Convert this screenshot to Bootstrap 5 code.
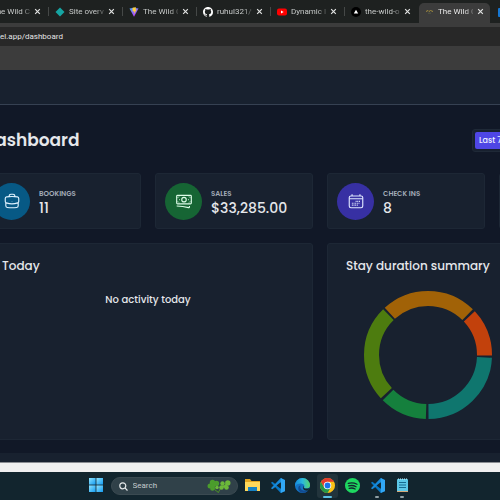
<!DOCTYPE html>
<html lang="en">
<head>
<meta charset="utf-8">
<meta name="viewport" content="width=device-width, initial-scale=1">
<title>The Wild Oasis</title>
<link href="https://cdn.jsdelivr.net/npm/bootstrap@5.3.0/dist/css/bootstrap.min.css" rel="stylesheet">
<style>
body{background:#111827;color:#e5e7eb;font-family:Poppins,Inter,"Open Sans",sans-serif;min-height:100vh;overflow:hidden}
button{border:0;background:none;padding:0;color:inherit}
svg{display:block;flex:none}
.chrome-ui{font-family:Roboto,"Noto Sans",sans-serif;font-size:8px;line-height:12px}
.tabstrip{background:#1e2120;height:23px}
.tab{flex:0 0 74px;height:23px;padding-left:6px;gap:4px;position:relative;color:#c6c9c8}
.tab::after{content:"";position:absolute;right:0;top:7px;width:1px;height:9px;background:#454847}
.tab.first{flex-basis:49px;justify-content:flex-end;padding-left:0;overflow:hidden}
.tab.plain::after{display:none}
.tab .label{width:35px;flex:none;white-space:nowrap;color:inherit;text-decoration:none;-webkit-mask-image:linear-gradient(90deg,#000 76%,transparent 110%);mask-image:linear-gradient(90deg,#000 76%,transparent 110%)}
.tab.active{flex-basis:71px;height:20px;margin-top:3px;padding-bottom:3px;background:#3c3c3c;border-radius:5px 5px 0 0;color:#e8e8e8}
.toolbar{background:#3c3c3c;padding:4px 0 24px}
.address{display:block;width:100%;height:19px;border:0;padding:0;background:#282828;color:#e4e4e4;font-size:8px}
.app-head{height:35px;background:#18212f;border-bottom:1px solid #364152}
.app-main{margin:0 -157px 0 -17px;padding-top:24px}
.page-head{margin-bottom:21px}
.page-title{font-size:17px;line-height:23px;font-weight:600}
.filter{width:185px;border:1px solid #1f2937;background:#18212f;border-radius:3px;padding:2px}
.filter button{background:#4f46e5;border-radius:2px;color:#eef2ff;font-size:8px;line-height:17px;font-weight:500;padding:0 4px}
.tiles{display:grid;grid-template-columns:repeat(4,1fr);gap:14px}
.tile{background:#18212f;border:1px solid #1d2735;border-radius:3px}
.stat{height:56px;padding:0 9px;gap:9px}
.disc{width:37px;height:37px;border-radius:50%;flex:none}
.stat-name{padding-top:5px;font-size:7px;line-height:9px;font-weight:600;color:#a3abb8;text-transform:uppercase}
.stat-value{font-size:14px;line-height:20px;font-weight:500}
.panel{grid-column:span 2;min-height:197px;padding:13px 18px}
.panel h2{font-size:12px;line-height:18px;font-weight:500;margin:0}
.empty{font-size:10px;line-height:16px;font-weight:500;margin:17px 0 0}
.donut{margin:15px 0 0 17px}
.scroll-edge{height:9px;background:#18212f;margin-top:13px}
.strip{height:10px;background:#f0f0f0;border-top:1px solid #8a8d92}
.taskbar{background:#12252e;height:28px;gap:4px;padding-right:2px}
.task-btn{width:21px;height:24px;padding-bottom:2px;border-radius:3px;position:relative;display:flex;align-items:center;justify-content:center}
.running::after{content:"";position:absolute;bottom:0;width:4px;height:2px;border-radius:1px;background:#91a0a6}
.current{background:#22343c}
.current.running::after{width:9px;background:#5bc0e4}
.search{width:127px;height:18px;border-radius:9px;background:#304149;padding:0 6px 0 7px;gap:5px;border:1px solid #3b4a51}
.search input{min-width:0;flex:1;border:0;background:none;padding:0;color:#d5dadc;font-size:8px;line-height:12px}
.search input::placeholder{color:#c4cbce;opacity:1}
</style>
<script src="https://cdn.jsdelivr.net/npm/bootstrap@5.3.0/dist/js/bootstrap.bundle.min.js"></script>
</head>
<body class="d-flex flex-column">
<svg width="0" height="0" class="position-absolute" aria-hidden="true">
<defs>
<symbol id="x" viewBox="0 0 6 6"><path d="M1 1l4 4M5 1L1 5" stroke="#e2e4e3" stroke-width="1" fill="none"/></symbol>
<symbol id="code" viewBox="0 0 16 16"><path d="M1 5l1.500-1L15 13.500 11.500 16z" fill="#0877c5"/><path d="M1 11l1.500 1L15 2.500 11.500 0z" fill="#1689da"/><path d="M11.500 0L16 2v12l-4.500 2z" fill="#31a7f5"/><path d="M11.500 4.500v7L7 8z" fill="#12252e"/></symbol>
<linearGradient id="win" x2="1" y2="1"><stop stop-color="#8fe4ff"/><stop offset="1" stop-color="#129af0"/></linearGradient>
<linearGradient id="edge" x2="1" y2="0"><stop stop-color="#1688dc"/><stop offset=".5" stop-color="#2bb9dc"/><stop offset="1" stop-color="#55d66b"/></linearGradient>
<linearGradient id="vite" x2=".6" y2="1"><stop stop-color="#41a8ff"/><stop offset="1" stop-color="#c43cf5"/></linearGradient>
</defs>
</svg>

<header class="chrome-ui">
<nav class="tabstrip d-flex overflow-hidden" aria-label="Tabs">
<div class="tab first d-flex align-items-center"><a class="label d-flex justify-content-end" href="#">The Wild C</a><button aria-label="Close tab" class="me-2"><svg width="7" height="7"><use href="#x"/></svg></button></div>
<div class="tab d-flex align-items-center"><svg width="10" height="10" viewBox="0 0 10 10"><path d="M5 .5L9.500 5 5 9.500.500 5z" fill="#16a5a3"/></svg><a class="label" href="#">Site overv</a><button aria-label="Close tab"><svg width="7" height="7"><use href="#x"/></svg></button></div>
<div class="tab d-flex align-items-center"><svg width="10" height="10" viewBox="0 0 10 10"><path d="M.5 1.500L5 .8l4.500.7L5 9.700z" fill="url(#vite)"/><path d="M3.500.700L7 .2 6.500 2.600l1.200-.2L5 7l.3-2.700-1.600.3z" fill="#ffd039"/></svg><a class="label" href="#">The Wild C</a><button aria-label="Close tab"><svg width="7" height="7"><use href="#x"/></svg></button></div>
<div class="tab d-flex align-items-center"><svg width="10" height="10" viewBox="0 0 16 16"><path fill="#fff" d="M8 0C3.580 0 0 3.580 0 8c0 3.540 2.290 6.530 5.470 7.590.4.070.550-.170.550-.380 0-.190-.010-.820-.010-1.490-2.010.370-2.530-.490-2.690-.940-.090-.230-.480-.940-.820-1.130-.280-.150-.680-.520-.010-.530.630-.010 1.080.580 1.230.820.720 1.210 1.870.870 2.330.660.070-.520.280-.870.510-1.070-1.780-.200-3.640-.890-3.640-3.950 0-.870.310-1.590.820-2.150-.080-.200-.360-1.020.080-2.120 0 0 .670-.210 2.200.820.640-.180 1.320-.270 2-.270s1.360.090 2 .270c1.530-1.040 2.200-.820 2.200-.820.440 1.100.160 1.920.080 2.120.510.560.820 1.270.820 2.150 0 3.070-1.870 3.750-3.650 3.950.290.250.540.730.540 1.480 0 1.070-.010 1.930-.010 2.200 0 .210.150.460.550.380A8.010 8.010 0 0016 8c0-4.420-3.580-8-8-8"/></svg><a class="label" href="#">ruhul321/t</a><button aria-label="Close tab"><svg width="7" height="7"><use href="#x"/></svg></button></div>
<div class="tab d-flex align-items-center"><svg width="10" height="10" viewBox="0 0 10 10"><rect y="1.500" width="10" height="7" rx="2" fill="#f00"/><path d="M4 3.500v3L6.700 5z" fill="#fff"/></svg><a class="label" href="#">Dynamic Ir</a><button aria-label="Close tab"><svg width="7" height="7"><use href="#x"/></svg></button></div>
<div class="tab plain d-flex align-items-center"><svg width="10" height="10" viewBox="0 0 10 10"><circle cx="5" cy="5" r="5" fill="#000"/><path d="M5 2.800l2.200 3.800H2.800z" fill="#fff"/></svg><a class="label" href="#">the-wild-o</a><button aria-label="Close tab"><svg width="7" height="7"><use href="#x"/></svg></button></div>
<div class="tab plain active d-flex align-items-center"><svg width="9" height="10" viewBox="0 0 9 10"><path d="M1 4.500l2-1 1 1 1.500-1 2.500 1" stroke="#a08a3c" fill="none"/><path d="M3 6.200h3" stroke="#555b48"/></svg><a class="label" href="#">The Wild C</a><button aria-label="Close tab"><svg width="7" height="7"><use href="#x"/></svg></button></div>
<div class="tab plain d-flex align-items-center ps-2 flex-shrink-1 overflow-hidden"><svg width="10" height="10"><rect width="10" height="9" y="1" rx="1" fill="#1577d2"/></svg></div>
</nav>
<div class="toolbar"><input class="address" type="text" aria-label="Address" value="el.app/dashboard"></div>
</header>

<div class="app-head"></div>
<div class="flex-grow-1 overflow-hidden">
<main class="app-main">
<div class="page-head d-flex align-items-center justify-content-between">
<h1 class="page-title m-0">Dashboard</h1>
<div class="filter d-flex"><button>Last 7 days</button></div>
</div>
<div class="tiles">
<section class="tile stat d-flex align-items-center">
<div class="disc d-flex align-items-center justify-content-center" style="background:#075985"><svg width="18" height="18" viewBox="0 0 24 24" fill="none" stroke="#e0f2fe" stroke-width="1.500"><path d="M20.250 14.150v4.250c0 1.090-.790 2.040-1.870 2.180a48 48 0 01-12.760 0c-1.080-.140-1.870-1.090-1.870-2.180v-4.250m16.500 0a2.200 2.200 0 00.750-1.660V8.700c0-1.080-.770-2.010-1.840-2.170a48 48 0 00-14.320 0A2.200 2.200 0 003 8.700v3.790c0 .640.280 1.240.750 1.660m16.500 0a2.200 2.200 0 01-.670.380 24 24 0 01-15.160 0 2.200 2.200 0 01-.670-.380M15.750 6V5.250A2.250 2.250 0 0013.500 3h-3a2.250 2.250 0 00-2.250 2.250V6M12 12.500v.5"/></svg></div>
<div><div class="stat-name">Bookings</div><div class="stat-value">11</div></div>
</section>
<section class="tile stat d-flex align-items-center">
<div class="disc d-flex align-items-center justify-content-center" style="background:#166534"><svg width="18" height="18" viewBox="0 0 24 24" fill="none" stroke="#dcfce7" stroke-width="1.500"><rect x="2.250" y="4.500" width="19.500" height="11.250" rx="1.200"/><circle cx="12" cy="10.200" r="3"/><path d="M5.800 10.200h.9M17.300 10.200h.9M2.250 18.750a60 60 0 0115.800 2.100.9.900 0 001.200-.9v-1.200"/><path d="M2.250 7.500H4.500a1 1 0 00.8-.8V4.500M21.750 7.500H19.500a1 1 0 01-.8-.8V4.500M2.250 13H4.500a1 1 0 01.8.8v2M21.750 13H19.500a1 1 0 00-.8.8v2" stroke-width=".8" opacity=".7"/></svg></div>
<div><div class="stat-name">Sales</div><div class="stat-value">$33,285.00</div></div>
</section>
<section class="tile stat d-flex align-items-center">
<div class="disc d-flex align-items-center justify-content-center" style="background:#3730a3"><svg width="18" height="18" viewBox="0 0 24 24" fill="none" stroke="#e0e7ff" stroke-width="1.500"><path d="M6.750 3v2.250M17.250 3v2.250M3 9h18"/><rect x="3" y="5.250" width="18" height="15.750" rx="2.200"/><path d="M11.500 12.500h6M6.500 15h10.500M6.500 17.500h8" stroke-dasharray="1.300 .9"/></svg></div>
<div><div class="stat-name">Check ins</div><div class="stat-value">8</div></div>
</section>
<section class="tile stat" aria-label="Occupancy rate"></section>
<section class="tile panel"><h2>Today</h2><p class="empty text-center">No activity today</p></section>
<section class="tile panel"><h2>Stay duration summary</h2>
<svg class="donut" width="130" height="130" viewBox="-65 -65 130 130" fill="none" stroke-width="15" role="img" aria-label="Stay durations">
<circle r="56.500" pathLength="360" stroke="#0f766e" stroke-dasharray="87 273" stroke-dashoffset="-2.500"/>
<circle r="56.500" pathLength="360" stroke="#15803d" stroke-dasharray="43 317" stroke-dashoffset="-92"/>
<circle r="56.500" pathLength="360" stroke="#4d7c0f" stroke-dasharray="88 272" stroke-dashoffset="-137.500"/>
<circle r="56.500" pathLength="360" stroke="#a16207" stroke-dasharray="87 273" stroke-dashoffset="-227.500"/>
<circle r="56.500" pathLength="360" stroke="#c2410c" stroke-dasharray="43.500 316.500" stroke-dashoffset="-317"/>
</svg></section>
</div>
<div class="scroll-edge"></div>
</main>
</div>

<footer>
<div class="strip"></div>
<nav class="chrome-ui taskbar d-flex align-items-center justify-content-center" aria-label="Taskbar">
<button class="task-btn" aria-label="Start"><svg width="14" height="14" viewBox="0 0 14 14" fill="url(#win)"><rect width="6.600" height="6.600"/><rect x="7.400" width="6.600" height="6.600"/><rect y="7.400" width="6.600" height="6.600"/><rect x="7.400" y="7.400" width="6.600" height="6.600"/></svg></button>
<div class="search d-flex align-items-center">
<svg width="9" height="9" viewBox="0 0 9 9" fill="none" stroke="#e4e8ea" stroke-width="1.200"><circle cx="3.800" cy="3.800" r="3"/><path d="M6 6l2.500 2.500"/></svg>
<input type="text" placeholder="Search" aria-label="Search">
<svg width="24" height="15" viewBox="0 0 24 15"><path d="M7 7q0 5 4 6M17 6q-4 3-6 8" stroke="#4a8a28" fill="none"/><g fill="#4b9d2c"><circle cx="3" cy="7" r="2.500"/><circle cx="5.500" cy="3.500" r="2.700"/><circle cx="9.500" cy="4.500" r="2.700"/><circle cx="5.500" cy="9.500" r="2.300"/><path d="M3 6l7-1-4 5z"/></g><g fill="#6cb83a"><circle cx="14.500" cy="8.500" r="2.300"/><circle cx="15.500" cy="4.500" r="2.200"/><circle cx="20.800" cy="4" r="2.700"/><circle cx="19.500" cy="8.500" r="2.300"/><circle cx="10" cy="8.500" r="1.800"/><path d="M15 8l5-4v5z"/></g></svg>
</div>
<button class="task-btn" aria-label="File Explorer"><svg width="15" height="14" viewBox="0 0 15 14"><path d="M0 1h5l1.500 2H15v10H0z" fill="#e3a51f"/><path d="M0 4h15v9H0z" fill="#ffd85a"/><path d="M3 9h9v4H3z" fill="#1682c4"/></svg></button>
<button class="task-btn" aria-label="Editor"><svg width="15" height="15"><use href="#code"/></svg></button>
<button class="task-btn" aria-label="Edge"><svg width="15" height="15" viewBox="0 0 16 16"><circle cx="8" cy="8" r="8" fill="#1473c4"/><path d="M0 8a8 8 0 0116 0c0 2-1.800 3.300-4 3.300-1.600 0-2.500-.7-2.200-1.500.5-1 .4-3.300-2.400-3.800C4 5.500 1 7 0 9z" fill="url(#edge)"/><path d="M6 8c-1.500 3 1 6.500 7.500 5.800C10 17.500 3.500 16 3.500 11c0-2 1-3 2.500-3z" fill="#124b91"/><path d="M9.500 8.300c.5 1-.7 1.700.5 2.500 1.500.9 4 .6 5.500-.5-.5 2-1.500 3-2.500 3.300-4 .2-5.500-2.600-3.500-5.300z" fill="#12252e"/></svg></button>
<button class="task-btn current running" aria-label="Chrome"><svg width="15" height="15" viewBox="0 0 16 16"><circle cx="8" cy="8" r="8" fill="#fbc116"/><path d="M1.070 4A8 8 0 008 16l3.500-6L8 8 4.500 10z" fill="#279847"/><path d="M1.070 4A8 8 0 0114.930 4H8L4.500 10z" fill="#e33b2e"/><circle cx="8" cy="8" r="4" fill="#fff"/><circle cx="8" cy="8" r="3.100" fill="#1a73e8"/></svg></button>
<button class="task-btn" aria-label="Spotify"><svg width="15" height="15" viewBox="0 0 16 16"><circle cx="8" cy="8" r="8" fill="#1ed760"/><path d="M3.500 5.700q5-1.300 9.300 1M4 8.400q4.300-1.100 7.800.9M4.500 11q3.500-.9 6.300.7" fill="none" stroke="#12252e" stroke-width="1.400" stroke-linecap="round"/></svg></button>
<button class="task-btn running" aria-label="Editor window"><svg width="15" height="15"><use href="#code"/></svg></button>
<button class="task-btn running" aria-label="Notepad"><svg width="11" height="14" viewBox="0 0 11 14"><rect y="1" width="11" height="13" rx="1" fill="#5cc8e8"/><path d="M0 13h11v1H0z" fill="#d3a878"/><path d="M2 4.500h7M2 7h7M2 9.500h7" stroke="#176b91"/><path d="M1 1h9" stroke="#d4f2fa" stroke-dasharray="1 1"/></svg></button>
</nav>
</footer>
</body>
</html>
